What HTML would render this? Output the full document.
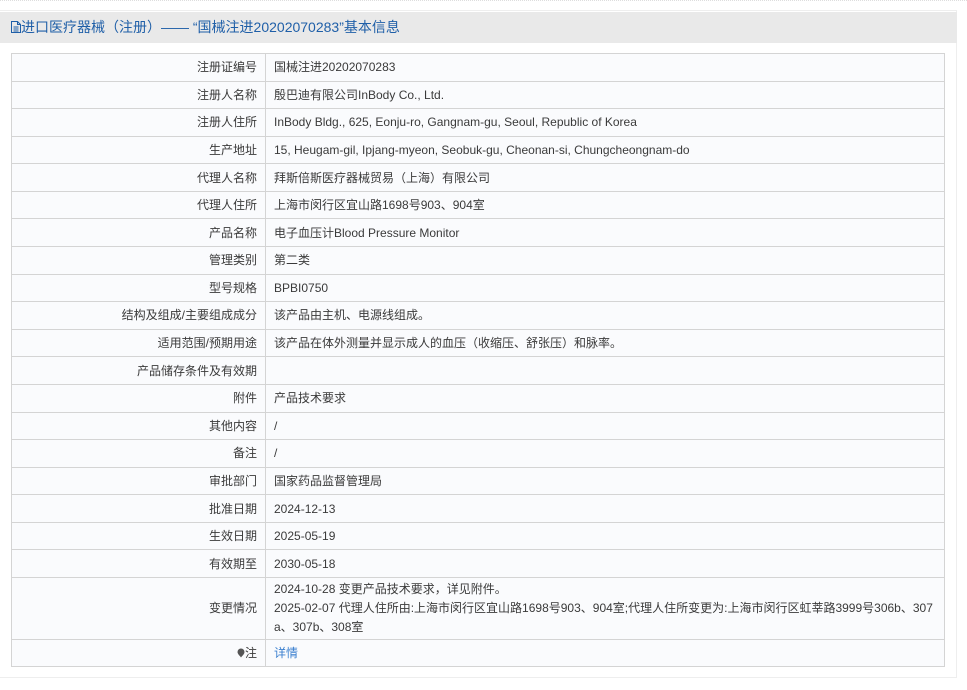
<!DOCTYPE html>
<html><head><meta charset="utf-8"><style>
body{margin:0;width:967px;height:690px;background:#fff;font-family:"Liberation Sans","Noto Sans CJK SC",sans-serif;font-size:12px;color:#3a3a3a;position:relative;overflow:hidden}
.dots{position:absolute;left:0;top:0;width:967px;height:3px;border-top:1px dotted #ddd}
.panel{position:absolute;left:0;top:10px;width:957px;height:668px;border:1px solid #eee;border-left:none;box-sizing:border-box}
.hd{position:absolute;left:0;top:12px;width:957px;height:31px;background:#e9e9e9;color:#1f5fa8;font-size:14px;line-height:31px;padding-left:11px;box-sizing:border-box}
table{position:absolute;left:11px;top:53px;width:934px;border-collapse:collapse;background:#fafbfd}
td{border:1px solid #d4d4d4;padding:0 8px;line-height:18px}
td.l{width:237px;text-align:right}
tr{height:27.58px}
a{color:#3a7fcf;text-decoration:none}
</style></head><body>
<div class="dots"></div>
<div class="panel"></div>
<div class="hd"><svg width="10" height="12" viewBox="0 0 10 12" style="vertical-align:-1px"><path d="M0.5 0.5h6l3 3v8h-9z M6.5 0.5v3h3 M2.5 6h5 M2.5 8h5 M2.5 10h5" fill="none" stroke="#1f5fa8" stroke-width="1"/></svg>进口医疗器械（注册）—— “国械注进20202070283”基本信息</div>
<table>
<tr><td class="l">注册证编号</td><td>国械注进20202070283</td></tr>
<tr><td class="l">注册人名称</td><td>殷巴迪有限公司InBody Co., Ltd.</td></tr>
<tr><td class="l">注册人住所</td><td>InBody Bldg., 625, Eonju-ro, Gangnam-gu, Seoul, Republic of Korea</td></tr>
<tr><td class="l">生产地址</td><td>15, Heugam-gil, Ipjang-myeon, Seobuk-gu, Cheonan-si, Chungcheongnam-do</td></tr>
<tr><td class="l">代理人名称</td><td>拜斯倍斯医疗器械贸易（上海）有限公司</td></tr>
<tr><td class="l">代理人住所</td><td>上海市闵行区宜山路1698号903、904室</td></tr>
<tr><td class="l">产品名称</td><td>电子血压计Blood Pressure Monitor</td></tr>
<tr><td class="l">管理类别</td><td>第二类</td></tr>
<tr><td class="l">型号规格</td><td>BPBI0750</td></tr>
<tr><td class="l">结构及组成/主要组成成分</td><td>该产品由主机、电源线组成。</td></tr>
<tr><td class="l">适用范围/预期用途</td><td>该产品在体外测量并显示成人的血压（收缩压、舒张压）和脉率。</td></tr>
<tr><td class="l">产品储存条件及有效期</td><td></td></tr>
<tr><td class="l">附件</td><td>产品技术要求</td></tr>
<tr><td class="l">其他内容</td><td>/</td></tr>
<tr><td class="l">备注</td><td>/</td></tr>
<tr><td class="l">审批部门</td><td>国家药品监督管理局</td></tr>
<tr><td class="l">批准日期</td><td>2024-12-13</td></tr>
<tr><td class="l">生效日期</td><td>2025-05-19</td></tr>
<tr><td class="l">有效期至</td><td>2030-05-18</td></tr>
<tr style="height:62px"><td class="l">变更情况</td><td style="line-height:19px;word-break:break-all">2024-10-28 变更产品技术要求，详见附件。<br>2025-02-07 代理人住所由:上海市闵行区宜山路1698号903、904室;代理人住所变更为:上海市闵行区虹莘路3999号306b、307a、307b、308室</td></tr>
<tr style="height:27px"><td class="l"><svg width="8" height="10" viewBox="0 0 8 10" style="vertical-align:-1px"><path d="M4 0.5a3.5 3.5 0 0 1 3.5 3.5c0 2-2.5 4-3.5 5.5c-1-1.5-3.5-3.5-3.5-5.5a3.5 3.5 0 0 1 3.5-3.5z" fill="#555"/></svg>注</td><td><a>详情</a></td></tr>
</table>
</body></html>
